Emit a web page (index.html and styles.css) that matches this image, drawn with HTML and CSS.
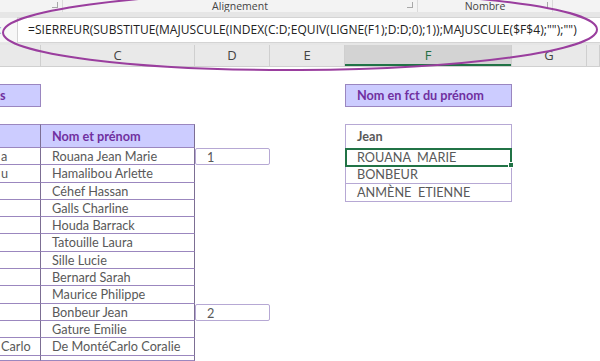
FILE: index.html
```html
<!DOCTYPE html>
<html lang="fr">
<head>
  <meta charset="UTF-8">
  <title>Nom en fct du prénom</title>
  <link rel="stylesheet" href="styles.css">
</head>
<body>
  <div class="ribbon">
    <div class="group g1"><span class="launcher"></span></div>
    <div class="group g2"><span class="label">Alignement</span><span class="launcher"></span></div>
    <div class="group g3"><span class="label">Nombre</span><span class="launcher"></span></div>
  </div>

  <div class="formula-bar">
    <span class="fx">x</span>
    <div class="formula">=SIERREUR(SUBSTITUE(MAJUSCULE(INDEX(C:D;EQUIV(LIGNE(F1);D:D;0);1));MAJUSCULE($F$4);"");"")</div>
  </div>

  <div class="col-headers">
    <div class="col"></div>
    <div class="col">C</div>
    <div class="col">D</div>
    <div class="col">E</div>
    <div class="col selected">F</div>
    <div class="col">G</div>
    <div class="col"></div>
  </div>

  <div class="sheet">
    <div class="title title-b">s</div>
    <div class="title title-f">Nom en fct du prénom</div>

    <div class="names">
      <div class="cell head first"></div><div class="cell head">Nom et prénom</div>
      <div class="cell first">a</div><div class="cell">Rouana Jean Marie</div>
      <div class="cell first">u</div><div class="cell">Hamalibou Arlette</div>
      <div class="cell first"></div><div class="cell">Céhef Hassan</div>
      <div class="cell first"></div><div class="cell">Galls Charline</div>
      <div class="cell first"></div><div class="cell">Houda Barrack</div>
      <div class="cell first"></div><div class="cell">Tatouille Laura</div>
      <div class="cell first"></div><div class="cell">Sille Lucie</div>
      <div class="cell first"></div><div class="cell">Bernard Sarah</div>
      <div class="cell first"></div><div class="cell">Maurice Philippe</div>
      <div class="cell first"></div><div class="cell">Bonbeur Jean</div>
      <div class="cell first"></div><div class="cell">Gature Emilie</div>
      <div class="cell first">Carlo</div><div class="cell">De MontéCarlo Coralie</div>
      <div class="cell first"></div><div class="cell"></div>
    </div>

    <div class="num num-1">1</div>
    <div class="num num-2">2</div>

    <div class="results">
      <div class="rcell rhead">Jean</div>
      <div class="rcell active">ROUANA  MARIE<span class="handle"></span></div>
      <div class="rcell">BONBEUR</div>
      <div class="rcell">ANMÈNE  ETIENNE</div>
    </div>
  </div>

  <svg class="circle" width="600" height="80" viewBox="0 0 600 80">
    <ellipse cx="300" cy="31" rx="297" ry="39" fill="none" stroke="#9a3e9e" stroke-width="2" transform="rotate(-0.3 300 31)"/>
  </svg>
</body>
</html>
```

FILE: styles.css
```css
body {
  margin: 0;
  width: 600px;
  height: 361px;
  overflow: hidden;
  position: relative;
  background: #fff;
  font-family: Lato, "Open Sans", sans-serif;
}

/* ruban */
.ribbon {
  display: flex;
  height: 12px;
  background: #f3f3f3;
  font-family: "Open Sans", sans-serif;
  font-size: 10.5px;
  color: #444;
  overflow: hidden;
}
.group {
  position: relative;
  border-right: 1px solid #dadada;
  display: flex;
  justify-content: center;
}
.g1 { width: 62px; }
.g2 { width: 354px; }
.g3 { width: 134px; }
.label {
  line-height: 12px;
}
.launcher {
  position: absolute;
  right: 4px;
  top: 2px;
  width: 5px;
  height: 5px;
  border-right: 1px solid #a8a8a8;
  border-bottom: 1px solid #a8a8a8;
}

/* barre de formule */
.formula-bar {
  display: flex;
  align-items: center;
  height: 33px;
  background: #e6e6e6;
  box-sizing: border-box;
  padding-top: 2px;
}
.fx {
  width: 17px;
  height: 24px;
  line-height: 24px;
  color: #9a9a9a;
  font-family: "Open Sans", sans-serif;
  font-size: 12px;
  text-indent: -5px;
  background: #f7f7f7;
}
.formula {
  flex: 1;
  height: 24px;
  line-height: 24px;
  background: #fff;
  border: 1px solid #d4d4d4;
  border-right: none;
  padding-left: 10px;
  font-family: "Open Sans", sans-serif;
  font-size: 12px;
  letter-spacing: 0.06px;
  color: #222;
  white-space: nowrap;
  overflow: hidden;
}

/* en-têtes de colonnes */
.col-headers {
  display: grid;
  grid-template-columns: 41px 154px 75px 75px 167px 75px 13px;
  height: 21px;
  background: #e9e9e9;
  border-bottom: 1px solid #d0d0d0;
}
.col {
  border-right: 1px solid #cfcfcf;
  text-align: center;
  line-height: 21px;
  font-family: "Open Sans", sans-serif;
  font-size: 13px;
  color: #444;
}
.col.selected {
  background: #d3d3d3;
  color: #1f6e43;
  box-shadow: inset 0 -2px 0 #217346;
}

/* feuille */
.sheet {
  display: grid;
  grid-template-columns: 41px 154px 75px 75px 167px 75px 13px;
  grid-template-rows: 17px 23px 17px 24px repeat(12, 17.3px) 5px;
  font-size: 12.7px;
  color: #595959;
}
.title {
  grid-row: 2;
  background: #ccccff;
  border: 1px solid #9a86c0;
  color: #7030a0;
  font-weight: bold;
  line-height: 21px;
  padding-left: 11px;
}
.title-b {
  grid-column: 1;
  border-left: none;
  padding-left: 0;
}
.title-f { grid-column: 5; }

.names {
  grid-column: 1 / 3;
  grid-row: 4 / span 14;
  display: grid;
  grid-template-columns: 41px 154px;
  grid-template-rows: 24px repeat(12, 17.3px) 5px;
  overflow: hidden;
}
.cell {
  border-bottom: 1px solid #9b87bf;
  border-right: 1px solid #7c6e93;
  padding-left: 11px;
  line-height: 17px;
  white-space: nowrap;
  overflow: hidden;
}
.cell.first {
  padding-left: 1px;
}
.cell.head {
  background: #ccccff;
  border-top: 1px solid #9b87bf;
  color: #7030a0;
  font-weight: bold;
  line-height: 23px;
}

.num {
  grid-column: 3;
  border: 1px solid #b6a8d4;
  border-radius: 2px;
  padding-left: 11px;
  line-height: 16px;
}
.num-1 { grid-row: 5; }
.num-2 { grid-row: 14; }

.results {
  grid-column: 5;
  grid-row: 4 / span 4;
  display: grid;
  grid-template-rows: 24px repeat(3, 17.3px);
  border: 1px solid #b6a8d4;
  align-self: start;
}
.rcell {
  position: relative;
  border-bottom: 1px solid #b6a8d4;
  padding-left: 11px;
  line-height: 17px;
  white-space: pre;
}
.rcell:last-child { border-bottom: none; }
.rhead {
  font-weight: bold;
  line-height: 23px;
}
.rcell.active {
  outline: 2px solid #217346;
  outline-offset: -1px;
}
.handle {
  position: absolute;
  right: -3px;
  bottom: -3px;
  width: 4px;
  height: 4px;
  background: #217346;
  border: 1px solid #fff;
}

.circle {
  position: absolute;
  left: 0;
  top: 0;
}
```
